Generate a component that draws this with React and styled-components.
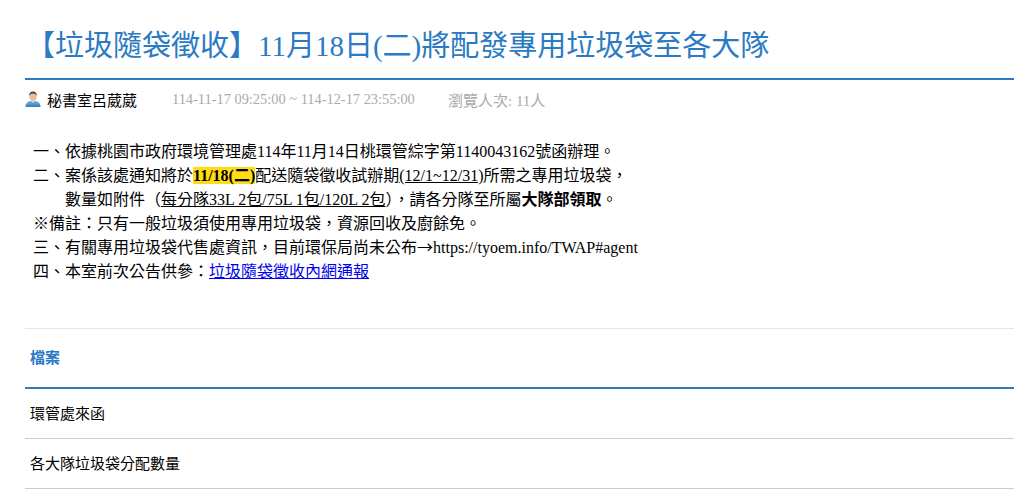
import React from "react";
import styled, { createGlobalStyle } from "styled-components";

const Global = createGlobalStyle`
  html, body { margin: 0; padding: 0; background: #fff; }
  body { font-family: "Liberation Serif", "Noto Sans CJK TC", serif; color: #000; }
`;
const Page = styled.main`
  width: 1014px;
  height: 494px;
  overflow: hidden;
  padding-left: 25px;
  box-sizing: border-box;
`;
const Title = styled.h1`
  margin: 0;
  padding: 27px 0 0 1px;
  box-sizing: border-box;
  font-size: 29px;
  line-height: 38px;
  font-weight: 400;
  color: #2a7ac4;
  border-bottom: 2px solid #2a7ac4;
  height: 80px;
`;
const Meta = styled.div`
  display: flex;
  align-items: center;
  height: 22px;
  margin-top: 8px;
`;
const Author = styled.span`
  font-size: 15px;
  margin-left: 6px;
  width: 125px;
  white-space: nowrap;
`;
const Muted = styled.span`
  font-size: ${(p) => p.$size}px;
  color: #aaa;
  white-space: nowrap;
  width: ${(p) => p.$w}px;
`;
const Content = styled.div`
  margin-top: 30px;
  padding-left: 8px;
  font-size: 16px;
  line-height: 24px;
  height: 188px;
`;
const Line = styled.div`
  padding-left: ${(p) => p.$indent || 0}px;
  white-space: nowrap;
`;
const Mark = styled.strong`
  background: #ffdc14;
`;
const Arrow = styled.span`
  font-family: "Noto Sans CJK TC", sans-serif;
  line-height: 0;
`;
const Files = styled.section``;
const FilesHead = styled.h2`
  margin: 0;
  height: 61px;
  padding: 0 0 4px 5px;
  box-sizing: border-box;
  display: flex;
  align-items: center;
  font-size: 15px;
  font-weight: 700;
  color: #2a7ac4;
  border-top: 1px solid #e6e6e6;
  border-bottom: 2px solid #337ab7;
`;
const FileRow = styled.div`
  padding: 0 0 2px 5px;
  box-sizing: border-box;
  height: 50px;
  display: flex;
  align-items: center;
  font-size: 15px;
  border-bottom: 1px solid #ccc;
`;
const UserIcon = () => (
  <svg width="16" height="17" viewBox="0 0 16 17" aria-hidden="true">
    <defs>
      <linearGradient id="shirt" x1="0" y1="0" x2="0" y2="1">
        <stop offset="0" stopColor="#6fb4dc" />
        <stop offset="1" stopColor="#2f7fb4" />
      </linearGradient>
    </defs>
    <path d="M0.5 16 C0.5 12 3 10.5 6 10 L10 10 C13 10.5 15.5 12 15.5 16 Z" fill="url(#shirt)" />
    <path d="M6 9.5 L8 12 L10 9.5 Z" fill="#f3d9c2" />
    <ellipse cx="8" cy="5.5" rx="3.6" ry="4.4" fill="#e8bd9c" />
    <path d="M4.2 5 C4 1.5 6 0.5 8 0.5 C10 0.5 12 1.5 11.8 5 C11 3 9.5 2.8 8 2.8 C6.5 2.8 5 3 4.2 5 Z" fill="#5b4a3c" />
  </svg>
);

export default function App() {
  return (
    <Page>
      <Global />
      <Title>【垃圾隨袋徵收】11月18日(二)將配發專用垃圾袋至各大隊</Title>
      <Meta>
        <UserIcon />
        <Author>秘書室呂葳葳</Author>
        <Muted $size={14.4} $w={276}>114-11-17 09:25:00 ~ 114-12-17 23:55:00</Muted>
        <Muted $size={15}>瀏覽人次: 11人</Muted>
      </Meta>
      <Content>
        <Line>一、依據桃園市政府環境管理處114年11月14日桃環管綜字第1140043162號函辦理。</Line>
        <Line>二、案係該處通知將於<Mark>11/18(二)</Mark>配送隨袋徵收試辦期<u>(12/1~12/31)</u>所需之專用垃圾袋，</Line>
        <Line $indent={32}>數量如附件（<u>每分隊33L 2包/75L 1包/120L 2包</u>），請各分隊至所屬<strong>大隊部領取</strong>。</Line>
        <Line>※備註：只有一般垃圾須使用專用垃圾袋，資源回收及廚餘免。</Line>
        <Line>三、有關專用垃圾袋代售處資訊，目前環保局尚未公布<Arrow>→</Arrow>https://tyoem.info/TWAP#agent</Line>
        <Line>四、本室前次公告供參：<a href="#notice">垃圾隨袋徵收內網通報</a></Line>
      </Content>
      <Files>
        <FilesHead>檔案</FilesHead>
        <FileRow>環管處來函</FileRow>
        <FileRow>各大隊垃圾袋分配數量</FileRow>
      </Files>
    </Page>
  );
}
